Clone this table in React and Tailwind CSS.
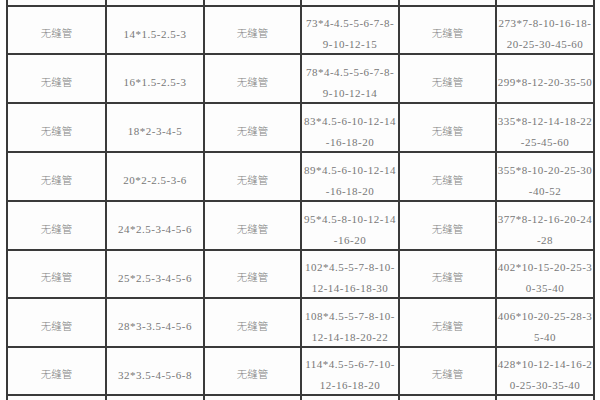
const rows = [
  { h: 'h-[46px]', a: '14*1.5-2.5-3', b: ['73*4-4.5-5-6-7-8-', '9-10-12-15'], c: ['273*7-8-10-16-18-', '20-25-30-45-60'] },
  { h: 'h-[47px]', a: '16*1.5-2.5-3', b: ['78*4-4.5-5-6-7-8-', '9-10-12-14'], c: ['299*8-12-20-35-50'] },
  { h: 'h-[47px]', a: '18*2-3-4-5', b: ['83*4.5-6-10-12-14', '-16-18-20'], c: ['335*8-12-14-18-22', '-25-45-60'] },
  { h: 'h-[47px]', a: '20*2-2.5-3-6', b: ['89*4.5-6-10-12-14', '-16-18-20'], c: ['355*8-10-20-25-30', '-40-52'] },
  { h: 'h-[47px]', a: '24*2.5-3-4-5-6', b: ['95*4.5-8-10-12-14', '-16-20'], c: ['377*8-12-16-20-24', '-28'] },
  { h: 'h-[46px]', a: '25*2.5-3-4-5-6', b: ['102*4.5-5-7-8-10-', '12-14-16-18-30'], c: ['402*10-15-20-25-3', '0-35-40'] },
  { h: 'h-[47px]', a: '28*3-3.5-4-5-6', b: ['108*4.5-5-7-8-10-', '12-14-18-20-22'], c: ['406*10-20-25-28-3', '5-40'] },
  { h: 'h-[46px]', a: '32*3.5-4-5-6-8', b: ['114*4.5-5-6-7-10-', '12-16-18-20'], c: ['428*10-12-14-16-2', '0-25-30-35-40'] },
];

function Cell({ lines, h }) {
  return (
    <div className={`${h} bg-[#fdfdfd] flex flex-col items-center justify-center pt-2 leading-[21px] whitespace-nowrap`}>
      {lines.map((l, i) => (
        <span key={i}>{l}</span>
      ))}
    </div>
  );
}

function Name({ h }) {
  return (
    <div className={`${h} bg-[#fdfdfd] flex items-center justify-center pt-2 text-[10.5px] font-light tracking-normal text-[#808080]`}>
      无缝管
    </div>
  );
}

export default function App() {
  return (
    <div className="w-[600px] h-[400px] overflow-hidden bg-white pl-[6px]">
      <div
        className="w-[589px] grid grid-cols-[97px_96px_95px_96px_95px_96px] gap-[2px] bg-[#3a3a3a] px-[2px] text-[11px] tracking-[0.5px] text-[#777]"
        style={{ fontFamily: '"Liberation Serif", "Noto Sans CJK SC", serif' }}
      >
        {[0, 1, 2, 3, 4, 5].map(i => (
          <div key={i} className="h-[5px] bg-[#fdfdfd]" />
        ))}
        {rows.map((r, i) => (
          <div key={i} className="contents">
            <Name h={r.h} />
            <Cell h={r.h} lines={[r.a]} />
            <Name h={r.h} />
            <Cell h={r.h} lines={r.b} />
            <Name h={r.h} />
            <Cell h={r.h} lines={r.c} />
          </div>
        ))}
        {[0, 1, 2, 3, 4, 5].map(i => (
          <div key={i} className="h-[20px] bg-[#fdfdfd]" />
        ))}
      </div>
    </div>
  );
}
